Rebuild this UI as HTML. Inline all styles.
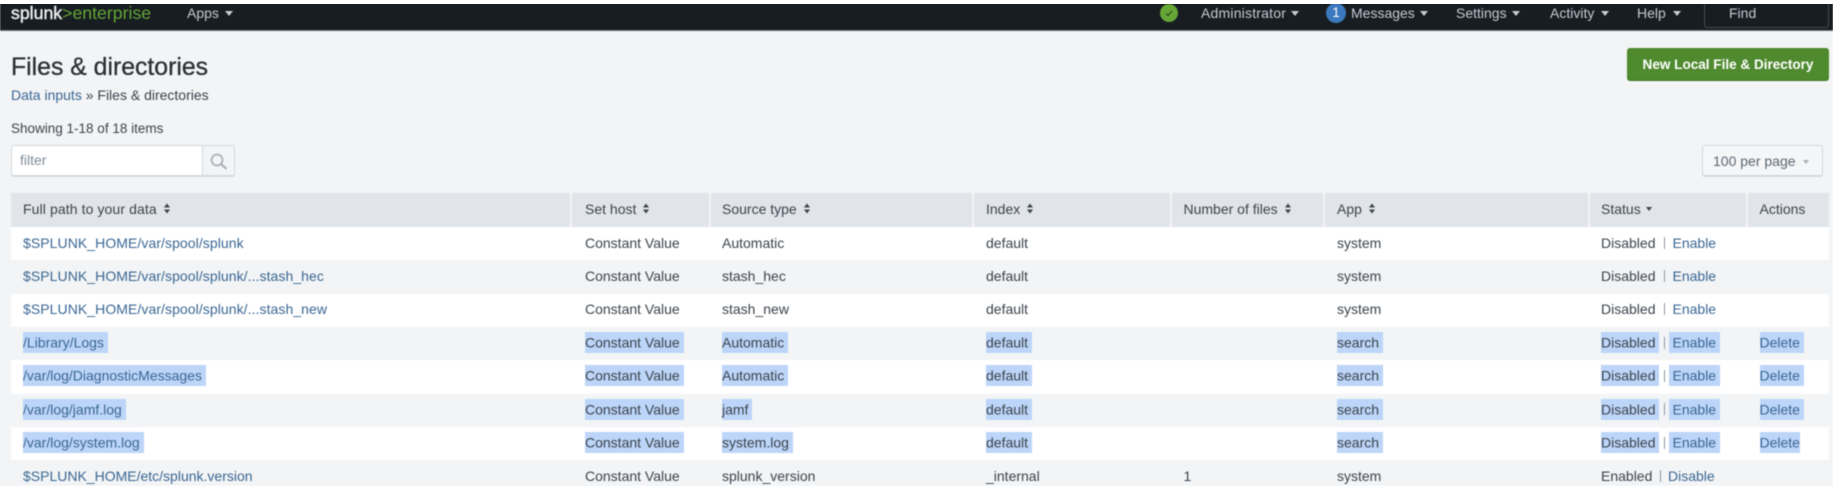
<!DOCTYPE html>
<html lang="en"><head><meta charset="utf-8"><title>Files &amp; directories</title>
<style>
html,body{margin:0;padding:0;background:#fff;width:1837px;height:492px;overflow:hidden}
body{font-family:"Liberation Sans",sans-serif;font-size:14px;color:#3c444d}
#clip{position:absolute;left:0;top:0;width:1833px;height:486px;clip-path:inset(4px 0 0 0);overflow:hidden}
#page{position:absolute;inset:0;background:#f2f4f5;filter:blur(.55px)}
.a{position:absolute;white-space:nowrap;line-height:20px}
#bar{position:absolute;left:0;top:0;width:100%;height:30px;background:#171d21;border-bottom:1px solid #6d7479}
.n{color:#c3cbd4;top:3px}
.c{position:absolute;top:11px}
a{color:#3b6794;text-decoration:none}
#btn{left:1627px;top:48px;width:202px;height:33px;background:#4f8a2f;border-bottom:1px solid #3f7424;box-sizing:border-box;border-radius:3px;color:#fff;font-weight:bold;font-size:13.55px;line-height:34px;text-align:center}
#filter{left:11px;top:145px;width:224px;height:32px;box-sizing:border-box;background:#fff;border:1px solid #d3d8dc;border-bottom-width:2px;border-radius:3px}
#filter i{position:absolute;left:190px;top:0;bottom:0;right:0;background:#f2f4f5;border-left:1px solid #d3d8dc;border-radius:0 3px 3px 0}
#pp{left:1702px;top:145px;width:121px;height:32px;box-sizing:border-box;border:1px solid #d3d8dc;border-bottom-width:2px;border-radius:3px;background:#f5f6f8}
#table{position:absolute;left:11px;top:193px;width:1818px}
.row{display:grid;grid-template-columns:562px 137px 264px 197.5px 153.5px 264px 158.5px 81.5px;height:33.33px;align-items:center;white-space:nowrap}
.row>div{padding-left:12px;position:relative;line-height:20px;top:-1px}
.h{height:34px;background:#e1e4e9;position:relative}
.h svg{margin-left:3px;vertical-align:0}
.w{background:#fff}
.sep{position:absolute;top:0;height:34px;width:2px;background:#f2f4f5}
mark{background:#bcd5f8;color:inherit;padding:2.5px 4px 2.5px 0}
mark.e{padding-left:4px;margin-left:-4px}
mark.l{padding-right:0}
.s,.b,.k{position:absolute;top:0}
.b{left:74.5px;top:4px;width:1px;height:12px;background:#8d97a1}
.k{left:83.5px}
.p{letter-spacing:.07px}
</style></head><body>
<div id="clip"><div id="page">
<div id="bar">
<div class="a" style="left:11px;top:2px;font-size:17.7px;line-height:22px"><span style="color:#eceef0;-webkit-text-stroke:.45px #eceef0">splunk</span><span style="color:#65a637">&gt;enterprise</span></div>
<div class="a n" style="left:187px">Apps</div><svg class="c" style="left:225px" width="8" height="5"><path d="M0 0H8L4 5Z" fill="#c3cbd4"/></svg>
<svg class="c" style="left:1160px;top:4px" width="18" height="18" viewBox="0 0 18 18"><circle cx="9" cy="9" r="9" fill="#65a637"/><path d="M6 9.5L8 11.5L12 7" fill="none" stroke="#2c4a1c" stroke-width="1.2"/></svg>
<div class="a n" style="left:1201px;letter-spacing:.2px">Administrator</div><svg class="c" style="left:1291px" width="8" height="5"><path d="M0 0H8L4 5Z" fill="#c3cbd4"/></svg>
<div class="a" style="left:1326px;top:3px;width:20px;height:20px;border-radius:50%;background:#3c78bd;color:#fff;text-align:center;font-size:13.5px;line-height:20px">1</div>
<div class="a n" style="left:1351px">Messages</div><svg class="c" style="left:1420px" width="8" height="5"><path d="M0 0H8L4 5Z" fill="#c3cbd4"/></svg>
<div class="a n" style="left:1456px">Settings</div><svg class="c" style="left:1512px" width="8" height="5"><path d="M0 0H8L4 5Z" fill="#c3cbd4"/></svg>
<div class="a n" style="left:1550px">Activity</div><svg class="c" style="left:1601px" width="8" height="5"><path d="M0 0H8L4 5Z" fill="#c3cbd4"/></svg>
<div class="a n" style="left:1637px">Help</div><svg class="c" style="left:1673px" width="8" height="5"><path d="M0 0H8L4 5Z" fill="#c3cbd4"/></svg>
<div class="a" style="left:1704px;top:-4px;width:125px;height:32px;box-sizing:border-box;border:1px solid #454d55;border-radius:3px"></div>
<div class="a n" style="left:1729px">Find</div>
</div>

<div class="a" style="left:11px;top:53px;font-size:24.8px;line-height:30px;color:#2b3033;-webkit-text-stroke:.3px #2b3033">Files &amp; directories</div>
<div class="a" style="left:11px;top:85px"><a>Data inputs</a> » Files &amp; directories</div>
<div class="a" style="left:11px;top:119px;font-size:13.5px">Showing 1-18 of 18 items</div>
<div class="a" id="btn">New Local File &amp; Directory</div>

<div class="a" id="filter"><i></i><div class="a" style="left:8px;top:4px;color:#818d99">filter</div>
<svg style="position:absolute;left:197px;top:6px" width="20" height="20" viewBox="0 0 20 20"><circle cx="8" cy="8" r="5.5" fill="none" stroke="#a8b0b8" stroke-width="1.7"/><path d="M12 12L17.5 17" stroke="#a8b0b8" stroke-width="2"/></svg></div>
<div class="a" id="pp"><div class="a" style="left:10px;top:5px;color:#5c6773">100 per page</div>
<svg style="position:absolute;left:100px;top:14px" width="6" height="4"><path d="M0 0H6L3 4Z" fill="#a8b0b8"/></svg></div>

<div id="table">
<div class="row h">
<div><span style="letter-spacing:.1px">Full path to your data</span> <svg width="6" height="11" viewBox="0 0 6 11"><path d="M0 4.5H6L3 .5ZM0 6.5H6L3 10.5Z" fill="#3c444d"/></svg></div>
<div>Set host <svg width="6" height="11" viewBox="0 0 6 11"><path d="M0 4.5H6L3 .5ZM0 6.5H6L3 10.5Z" fill="#3c444d"/></svg></div>
<div>Source type <svg width="6" height="11" viewBox="0 0 6 11"><path d="M0 4.5H6L3 .5ZM0 6.5H6L3 10.5Z" fill="#3c444d"/></svg></div>
<div>Index <svg width="6" height="11" viewBox="0 0 6 11"><path d="M0 4.5H6L3 .5ZM0 6.5H6L3 10.5Z" fill="#3c444d"/></svg></div>
<div>Number of files <svg width="6" height="11" viewBox="0 0 6 11"><path d="M0 4.5H6L3 .5ZM0 6.5H6L3 10.5Z" fill="#3c444d"/></svg></div>
<div>App <svg width="6" height="11" viewBox="0 0 6 11"><path d="M0 4.5H6L3 .5ZM0 6.5H6L3 10.5Z" fill="#3c444d"/></svg></div>
<div>Status <svg style="margin-left:1px" width="6" height="11" viewBox="0 0 6 11"><path d="M0 4H6L3 8Z" fill="#3c444d"/></svg></div>
<div>Actions</div>
<i class="sep" style="left:559px"></i><i class="sep" style="left:698px"></i><i class="sep" style="left:961px"></i><i class="sep" style="left:1159px"></i><i class="sep" style="left:1312px"></i><i class="sep" style="left:1577px"></i><i class="sep" style="left:1735px"></i>
</div>
<div class="row w"><div><a class="p">$SPLUNK_HOME/var/spool/splunk</a></div><div>Constant Value</div><div>Automatic</div><div>default</div><div></div><div>system</div><div><span class="s">Disabled</span><i class="b"></i><a class="k">Enable</a>&nbsp;</div><div></div></div>
<div class="row"><div><a class="p">$SPLUNK_HOME/var/spool/splunk/...stash_hec</a></div><div>Constant Value</div><div>stash_hec</div><div>default</div><div></div><div>system</div><div><span class="s">Disabled</span><i class="b"></i><a class="k">Enable</a>&nbsp;</div><div></div></div>
<div class="row w"><div><a class="p">$SPLUNK_HOME/var/spool/splunk/...stash_new</a></div><div>Constant Value</div><div>stash_new</div><div>default</div><div></div><div>system</div><div><span class="s">Disabled</span><i class="b"></i><a class="k">Enable</a>&nbsp;</div><div></div></div>
<div class="row"><div><mark><a>/Library/Logs</a></mark></div><div><mark>Constant Value</mark></div><div><mark>Automatic</mark></div><div><mark>default</mark></div><div></div><div><mark>search</mark></div><div><span class="s"><mark>Disabled</mark></span><i class="b"></i><a class="k"><mark class="e">Enable</mark></a>&nbsp;</div><div><a><mark>Delete</mark></a></div></div>
<div class="row w"><div><mark><a>/var/log/DiagnosticMessages</a></mark></div><div><mark>Constant Value</mark></div><div><mark>Automatic</mark></div><div><mark>default</mark></div><div></div><div><mark>search</mark></div><div><span class="s"><mark>Disabled</mark></span><i class="b"></i><a class="k"><mark class="e">Enable</mark></a>&nbsp;</div><div><a><mark>Delete</mark></a></div></div>
<div class="row"><div><mark><a>/var/log/jamf.log</a></mark></div><div><mark>Constant Value</mark></div><div><mark>jamf</mark></div><div><mark>default</mark></div><div></div><div><mark>search</mark></div><div><span class="s"><mark>Disabled</mark></span><i class="b"></i><a class="k"><mark class="e">Enable</mark></a>&nbsp;</div><div><a><mark>Delete</mark></a></div></div>
<div class="row w"><div><mark><a>/var/log/system.log</a></mark></div><div><mark>Constant Value</mark></div><div><mark>system.log</mark></div><div><mark>default</mark></div><div></div><div><mark>search</mark></div><div><span class="s"><mark>Disabled</mark></span><i class="b"></i><a class="k"><mark class="e">Enable</mark></a>&nbsp;</div><div><a><mark class="l">Delete</mark></a></div></div>
<div class="row"><div><a>$SPLUNK_HOME/etc/splunk.version</a></div><div>Constant Value</div><div>splunk_version</div><div>_internal</div><div>1</div><div>system</div><div><span class="s">Enabled</span><i class="b" style="left:71px"></i><a class="k" style="left:79px">Disable</a>&nbsp;</div><div></div></div>
</div>
</div></div>
</body></html>
